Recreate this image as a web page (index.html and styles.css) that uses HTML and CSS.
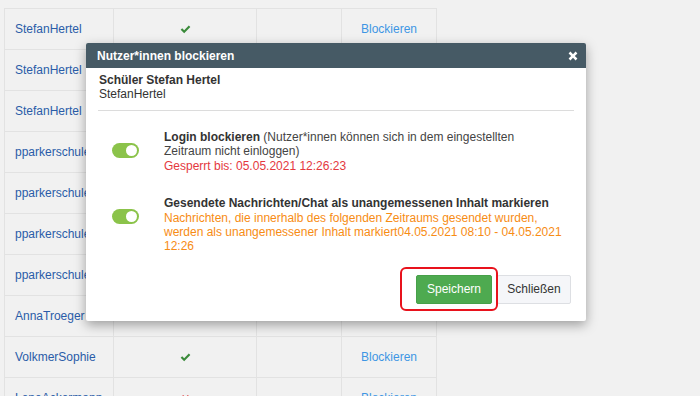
FILE: index.html
```html
<!DOCTYPE html>
<html lang="de">
<head>
<meta charset="utf-8">
<title>Nutzer*innen blockieren</title>
<link rel="stylesheet" href="styles.css">
</head>
<body>
<div class="page">
  <table class="grid">
    <colgroup><col class="c1"><col class="c2"><col class="c3"><col class="c4"></colgroup>
    <tbody>
      <tr><td class="name">StefanHertel</td><td class="mid"><svg class="check" viewBox="0 0 10 8"><path d="M0.6 4.2 L2 2.8 L3.8 4.6 L8 0.4 L9.4 1.8 L3.8 7.4 Z"/></svg></td><td></td><td class="act">Blockieren</td></tr>
      <tr><td class="name">StefanHertel</td><td class="mid"><svg class="check" viewBox="0 0 10 8"><path d="M0.6 4.2 L2 2.8 L3.8 4.6 L8 0.4 L9.4 1.8 L3.8 7.4 Z"/></svg></td><td></td><td class="act">Blockieren</td></tr>
      <tr><td class="name">StefanHertel</td><td class="mid"><svg class="check" viewBox="0 0 10 8"><path d="M0.6 4.2 L2 2.8 L3.8 4.6 L8 0.4 L9.4 1.8 L3.8 7.4 Z"/></svg></td><td></td><td class="act">Blockieren</td></tr>
      <tr><td class="name">pparkerschule</td><td class="mid"><svg class="check" viewBox="0 0 10 8"><path d="M0.6 4.2 L2 2.8 L3.8 4.6 L8 0.4 L9.4 1.8 L3.8 7.4 Z"/></svg></td><td></td><td class="act">Blockieren</td></tr>
      <tr><td class="name">pparkerschule</td><td class="mid"><svg class="check" viewBox="0 0 10 8"><path d="M0.6 4.2 L2 2.8 L3.8 4.6 L8 0.4 L9.4 1.8 L3.8 7.4 Z"/></svg></td><td></td><td class="act">Blockieren</td></tr>
      <tr><td class="name">pparkerschule</td><td class="mid"><svg class="check" viewBox="0 0 10 8"><path d="M0.6 4.2 L2 2.8 L3.8 4.6 L8 0.4 L9.4 1.8 L3.8 7.4 Z"/></svg></td><td></td><td class="act">Blockieren</td></tr>
      <tr><td class="name">pparkerschule</td><td class="mid"><svg class="check" viewBox="0 0 10 8"><path d="M0.6 4.2 L2 2.8 L3.8 4.6 L8 0.4 L9.4 1.8 L3.8 7.4 Z"/></svg></td><td></td><td class="act">Blockieren</td></tr>
      <tr><td class="name">AnnaTroeger</td><td class="mid"><svg class="check" viewBox="0 0 10 8"><path d="M0.6 4.2 L2 2.8 L3.8 4.6 L8 0.4 L9.4 1.8 L3.8 7.4 Z"/></svg></td><td></td><td class="act">Blockieren</td></tr>
      <tr><td class="name">VolkmerSophie</td><td class="mid"><svg class="check" viewBox="0 0 10 8"><path d="M0.6 4.2 L2 2.8 L3.8 4.6 L8 0.4 L9.4 1.8 L3.8 7.4 Z"/></svg></td><td></td><td class="act">Blockieren</td></tr>
      <tr><td class="name">LeneAckermann</td><td class="mid"><svg class="cross" viewBox="0 0 10 10"><path d="M1 2.4 L2.4 1 L5 3.6 L7.6 1 L9 2.4 L6.4 5 L9 7.6 L7.6 9 L5 6.4 L2.4 9 L1 7.6 L3.6 5 Z"/></svg></td><td></td><td class="act">Blockieren</td></tr>
    </tbody>
  </table>

  <div class="modal">
    <div class="modal-header">
      <span class="modal-title">Nutzer*innen blockieren</span>
      <svg class="close" viewBox="0 0 10 10"><path d="M0.6 2.4 L2.4 0.6 L5 3.2 L7.6 0.6 L9.4 2.4 L6.8 5 L9.4 7.6 L7.6 9.4 L5 6.8 L2.4 9.4 L0.6 7.6 L3.2 5 Z"/></svg>
    </div>
    <div class="modal-body">
      <div class="user">
        <div class="user-name">Schüler Stefan Hertel</div>
        <div class="user-login">StefanHertel</div>
      </div>
      <div class="options">
        <div class="option">
          <span class="toggle"><span class="knob"></span></span>
          <div class="option-text">
            <b>Login blockieren</b> (Nutzer*innen können sich in dem eingestellten Zeitraum nicht einloggen)
            <div class="red">Gesperrt bis: 05.05.2021 12:26:23</div>
          </div>
        </div>
        <div class="option second">
          <span class="toggle"><span class="knob"></span></span>
          <div class="option-text">
            <b>Gesendete Nachrichten/Chat als unangemessenen Inhalt markieren</b>
            <div class="orange">Nachrichten, die innerhalb des folgenden Zeitraums gesendet wurden, werden als unangemessener Inhalt markiert04.05.2021 08:10 - 04.05.2021 12:26</div>
          </div>
        </div>
      </div>
      <div class="footer">
        <button class="btn btn-save">Speichern</button>
        <button class="btn btn-close">Schließen</button>
      </div>
    </div>
    <div class="highlight"></div>
  </div>
</div>
</body>
</html>
```

FILE: styles.css
```css
html, body {
  margin: 0;
  padding: 0;
  background: #f1f1f1;
  font-family: "Liberation Sans", Arial, sans-serif;
  font-size: 12px;
  color: #333;
  overflow: hidden;
}

.page {
  position: relative;
  width: 700px;
  height: 396px;
  overflow: hidden;
}

.grid {
  border-collapse: collapse;
  margin-left: 4px;
  margin-top: 8px;
  table-layout: fixed;
  width: 432px;
}

.c1 { width: 109px; }
.c2 { width: 143px; }
.c3 { width: 85px; }
.c4 { width: 95px; }

.grid td {
  height: 40px;
  padding: 0;
  border: 1px solid #e2e2e2;
  vertical-align: middle;
  white-space: nowrap;
  overflow: hidden;
}

.grid td.name {
  padding-left: 10px;
  color: #2a5ca8;
}

.grid td.mid { text-align: center; }

.grid td.act {
  text-align: center;
  color: #3e96e4;
}

.check {
  width: 11px;
  height: 9px;
  fill: #3a8a3a;
  display: inline-block;
  vertical-align: middle;
}

.cross {
  width: 9px;
  height: 9px;
  fill: #e04848;
  display: inline-block;
  vertical-align: middle;
}

.modal {
  position: absolute;
  left: 86px;
  top: 43px;
  width: 500px;
  background: #fff;
  border-radius: 2px;
  box-shadow: 0 4px 12px rgba(0, 0, 0, 0.35);
}

.modal-header {
  height: 25px;
  background: #465a65;
  border-radius: 2px 2px 0 0;
  display: flex;
  align-items: center;
  justify-content: space-between;
  padding: 0 8px 0 11px;
}

.modal-title {
  color: #fff;
  font-weight: bold;
  font-size: 12px;
}

.close {
  width: 10px;
  height: 10px;
  fill: #fff;
}

.modal-body {
  padding: 0 12px 17px 12px;
}

.user {
  padding-top: 5px;
  padding-left: 1px;
  padding-bottom: 9px;
  border-bottom: 1px solid #dcdcdc;
  line-height: 14px;
}

.user-name {
  font-weight: bold;
  color: #333;
}

.user-login { color: #333; }

.options {
  padding-top: 19px;
}

.option {
  display: flex;
  align-items: flex-start;
  line-height: 14.4px;
  color: #444;
}

.option.second { margin-top: 23px; }

.toggle {
  flex: none;
  margin-left: 14px;
  margin-top: 13px;
  width: 27px;
  height: 15px;
  border-radius: 8px;
  background: #8bc34a;
  position: relative;
}

.knob {
  position: absolute;
  right: 2px;
  top: 2px;
  width: 11px;
  height: 11px;
  border-radius: 50%;
  background: #fff;
}

.option-text {
  margin-left: 25px;
  width: 399px;
}

.option-text b { color: #333; }

.red { color: #e4383e; }

.orange { color: #f78c14; }

.footer {
  margin-top: 21px;
  display: flex;
  justify-content: flex-end;
  gap: 5px;
  padding-right: 3px;
}

.btn {
  font-family: "Liberation Sans", Arial, sans-serif;
  font-size: 12px;
  height: 29px;
  border-radius: 2px;
  padding: 0;
  cursor: pointer;
}

.btn-save {
  width: 76px;
  background: #4eaa50;
  border: 1px solid #47a049;
  color: #fff;
}

.btn-close {
  width: 74px;
  background: #f5f6f9;
  border: 1px solid #dddfe3;
  color: #333;
}

.highlight {
  position: absolute;
  left: 314px;
  top: 224px;
  width: 94px;
  height: 40px;
  border: 2px solid #e8121c;
  border-radius: 6px;
}
```
